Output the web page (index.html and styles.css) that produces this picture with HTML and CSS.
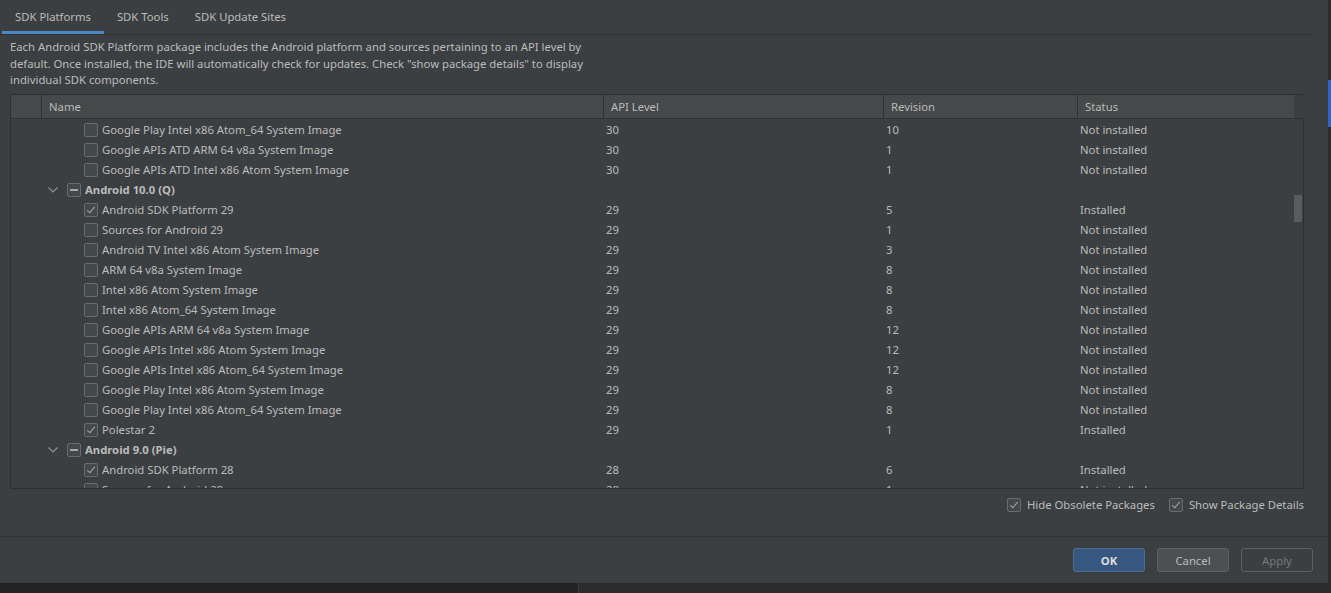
FILE: index.html
```html
<!DOCTYPE html>
<html>
<head>
<meta charset="utf-8">
<link rel="stylesheet" href="styles.css">
</head>
<body>
<div class="screen">
  <div class="dialog">
    <div class="tabbar">
      <div class="tab active">SDK Platforms</div>
      <div class="tab">SDK Tools</div>
      <div class="tab">SDK Update Sites</div>
    </div>
    <div class="content">
      <p class="desc">Each Android SDK Platform package includes the Android platform and sources pertaining to an API level by<br>default. Once installed, the IDE will automatically check for updates. Check "show package details" to display<br>individual SDK components.</p>
      <div class="table">
        <div class="thead">
          <div class="th th-first"></div>
          <div class="th">Name</div>
          <div class="th">API Level</div>
          <div class="th">Revision</div>
          <div class="th th-last">Status</div>
        </div>
        <div class="tbody">
          <div class="rows" id="rows">
            <div class="row"><div class="name child"><span class="cb"></span>Google Play Intel x86 Atom_64 System Image</div><div class="cell">30</div><div class="cell">10</div><div class="cell">Not installed</div></div>
            <div class="row"><div class="name child"><span class="cb"></span>Google APIs ATD ARM 64 v8a System Image</div><div class="cell">30</div><div class="cell">1</div><div class="cell">Not installed</div></div>
            <div class="row"><div class="name child"><span class="cb"></span>Google APIs ATD Intel x86 Atom System Image</div><div class="cell">30</div><div class="cell">1</div><div class="cell">Not installed</div></div>
            <div class="row"><div class="name group"><span class="chev"><svg width="10" height="6" viewBox="0 0 10 6"><path d="M0.5 0.5 L5 5 L9.5 0.5" fill="none" stroke="#8e9295" stroke-width="1.2"/></svg></span><span class="cb mixed"></span>Android 10.0 (Q)</div><div class="cell"></div><div class="cell"></div><div class="cell"></div></div>
            <div class="row"><div class="name child"><span class="cb checked"></span>Android SDK Platform 29</div><div class="cell">29</div><div class="cell">5</div><div class="cell">Installed</div></div>
            <div class="row"><div class="name child"><span class="cb"></span>Sources for Android 29</div><div class="cell">29</div><div class="cell">1</div><div class="cell">Not installed</div></div>
            <div class="row"><div class="name child"><span class="cb"></span>Android TV Intel x86 Atom System Image</div><div class="cell">29</div><div class="cell">3</div><div class="cell">Not installed</div></div>
            <div class="row"><div class="name child"><span class="cb"></span>ARM 64 v8a System Image</div><div class="cell">29</div><div class="cell">8</div><div class="cell">Not installed</div></div>
            <div class="row"><div class="name child"><span class="cb"></span>Intel x86 Atom System Image</div><div class="cell">29</div><div class="cell">8</div><div class="cell">Not installed</div></div>
            <div class="row"><div class="name child"><span class="cb"></span>Intel x86 Atom_64 System Image</div><div class="cell">29</div><div class="cell">8</div><div class="cell">Not installed</div></div>
            <div class="row"><div class="name child"><span class="cb"></span>Google APIs ARM 64 v8a System Image</div><div class="cell">29</div><div class="cell">12</div><div class="cell">Not installed</div></div>
            <div class="row"><div class="name child"><span class="cb"></span>Google APIs Intel x86 Atom System Image</div><div class="cell">29</div><div class="cell">12</div><div class="cell">Not installed</div></div>
            <div class="row"><div class="name child"><span class="cb"></span>Google APIs Intel x86 Atom_64 System Image</div><div class="cell">29</div><div class="cell">12</div><div class="cell">Not installed</div></div>
            <div class="row"><div class="name child"><span class="cb"></span>Google Play Intel x86 Atom System Image</div><div class="cell">29</div><div class="cell">8</div><div class="cell">Not installed</div></div>
            <div class="row"><div class="name child"><span class="cb"></span>Google Play Intel x86 Atom_64 System Image</div><div class="cell">29</div><div class="cell">8</div><div class="cell">Not installed</div></div>
            <div class="row"><div class="name child"><span class="cb checked"></span>Polestar 2</div><div class="cell">29</div><div class="cell">1</div><div class="cell">Installed</div></div>
            <div class="row"><div class="name group"><span class="chev"><svg width="10" height="6" viewBox="0 0 10 6"><path d="M0.5 0.5 L5 5 L9.5 0.5" fill="none" stroke="#8e9295" stroke-width="1.2"/></svg></span><span class="cb mixed"></span>Android 9.0 (Pie)</div><div class="cell"></div><div class="cell"></div><div class="cell"></div></div>
            <div class="row"><div class="name child"><span class="cb checked"></span>Android SDK Platform 28</div><div class="cell">28</div><div class="cell">6</div><div class="cell">Installed</div></div>
            <div class="row"><div class="name child"><span class="cb"></span>Sources for Android 28</div><div class="cell">28</div><div class="cell">1</div><div class="cell">Not installed</div></div>
          </div>
          <div class="scrolltrack"><div class="thumb"></div></div>
        </div>
      </div>
      <div class="options">
        <label class="opt"><span class="cb checked"></span>Hide Obsolete Packages</label>
        <label class="opt"><span class="cb checked"></span>Show Package Details</label>
      </div>
    </div>
    <div class="footer">
      <button class="btn primary">OK</button>
      <button class="btn">Cancel</button>
      <button class="btn disabled">Apply</button>
    </div>
  </div>
  <div class="side">
    <div class="side-blue"></div>
  </div>
</div>
<div class="bottom"><div class="bottom-left"></div><div class="bottom-right"></div></div>
</body>
</html>
```
FILE: styles.css
```css
html, body {
  margin: 0;
  padding: 0;
  background: #2b2b2b;
  width: 1331px;
  height: 593px;
  overflow: hidden;
}
body {
  font-family: "Noto Sans", "Open Sans", sans-serif;
  font-size: 11.3px;
  color: #bbbbbb;
}
.screen {
  display: flex;
  height: 583px;
}
.dialog {
  width: 1328px;
  height: 583px;
  background: #3c3f41;
  display: flex;
  flex-direction: column;
}
.side {
  width: 3px;
  background: #2b2b2b;
  padding-top: 80px;
}
.side-blue {
  height: 47px;
  background: #2f65ca;
}
.tabbar {
  display: flex;
  height: 34px;
  padding-left: 2px;
  margin-right: 16px;
  border-bottom: 1px solid #323232;
  box-sizing: content-box;
}
.tab {
  padding: 0 13px;
  line-height: 34px;
  height: 34px;
  box-sizing: border-box;
  color: #bbbbbb;
}
.tab.active {
  box-shadow: inset 0 -3px 0 #4a88c7;
}
.content {
  padding: 0 24px 0 10px;
  flex: 1;
  display: flex;
  flex-direction: column;
}
.desc {
  margin: 4px 0 0 0;
  line-height: 16.5px;
  white-space: nowrap;
}
.table {
  margin-top: 5px;
  width: 1294px;
  height: 395px;
  border: 1px solid #2d2f30;
  box-sizing: border-box;
  display: flex;
  flex-direction: column;
}
.thead {
  display: grid;
  grid-template-columns: 31px 562px 280px 194px 216px 10px;
  height: 24px;
  background: #45494a;
  border-bottom: 1px solid #323232;
  box-sizing: border-box;
}
.thead::after {
  content: "";
  background: #3c3f41;
}
.th {
  border-right: 1px solid #323232;
  padding-left: 7px;
  line-height: 23px;
  white-space: nowrap;
}
.th-last {
  border-right: none;
}
.th-first {
  padding: 0;
}
.tbody {
  flex: 1;
  display: flex;
  overflow: hidden;
}
.rows {
  flex: 1;
  padding-top: 1px;
  overflow: hidden;
}
.row {
  display: grid;
  grid-template-columns: 593px 280px 194px 216px;
  height: 20px;
  line-height: 20px;
  white-space: nowrap;
}
.name {
  display: flex;
  align-items: center;
}
.name.child {
  padding-left: 73px;
}
.name.group {
  padding-left: 37px;
  font-weight: bold;
}
.chev {
  display: inline-flex;
  width: 19px;
  height: 20px;
  align-items: center;
}
.cell {
  padding-left: 2px;
}
.cb {
  display: inline-block;
  width: 14px;
  height: 14px;
  box-sizing: border-box;
  border: 1px solid #6b6b6b;
  border-radius: 2px;
  background: #43494a;
  margin-right: 4px;
  position: relative;
  flex: none;
}
.cb.checked::after {
  content: "";
  position: absolute;
  left: 4px;
  top: 1px;
  width: 3px;
  height: 7px;
  border-right: 1.6px solid #a8a8a8;
  border-bottom: 1.6px solid #a8a8a8;
  transform: rotate(40deg);
}
.cb.mixed::after {
  content: "";
  position: absolute;
  left: 2px;
  top: 5px;
  width: 8px;
  height: 2px;
  background: #a8a8a8;
}
.scrolltrack {
  width: 10px;
  background: #3c3f41;
  padding-top: 76px;
  box-sizing: border-box;
}
.thumb {
  margin-left: 1px;
  width: 8px;
  height: 27px;
  background: #595b5d;
}
.options {
  display: flex;
  justify-content: flex-end;
  gap: 14px;
  margin-top: 7px;
  height: 18px;
  align-items: center;
}
.opt {
  display: flex;
  align-items: center;
}
.opt .cb {
  margin-right: 6px;
}
.footer {
  border-top: 1px solid #323232;
  height: 47px;
  display: flex;
  justify-content: flex-end;
  align-items: flex-start;
  padding: 11px 15px 0 0;
  gap: 12px;
  box-sizing: border-box;
}
.btn {
  width: 72px;
  height: 24px;
  border-radius: 3px;
  font-family: "Noto Sans", "Open Sans", sans-serif;
  font-size: 11.3px;
  color: #bbbbbb;
  background: #4c5052;
  border: 1px solid #5e6060;
  padding: 0;
}
.btn.primary {
  background: #365880;
  border-color: #4c708c;
  color: #dddddd;
  font-weight: bold;
}
.btn.disabled {
  background: transparent;
  color: #777777;
}
.bottom {
  display: flex;
  height: 10px;
}
.bottom-left {
  width: 578px;
  background: #242424;
  border-right: 1px solid #3a3a3a;
}
.bottom-right {
  flex: 1;
  background: #2b2b2b;
}
```
